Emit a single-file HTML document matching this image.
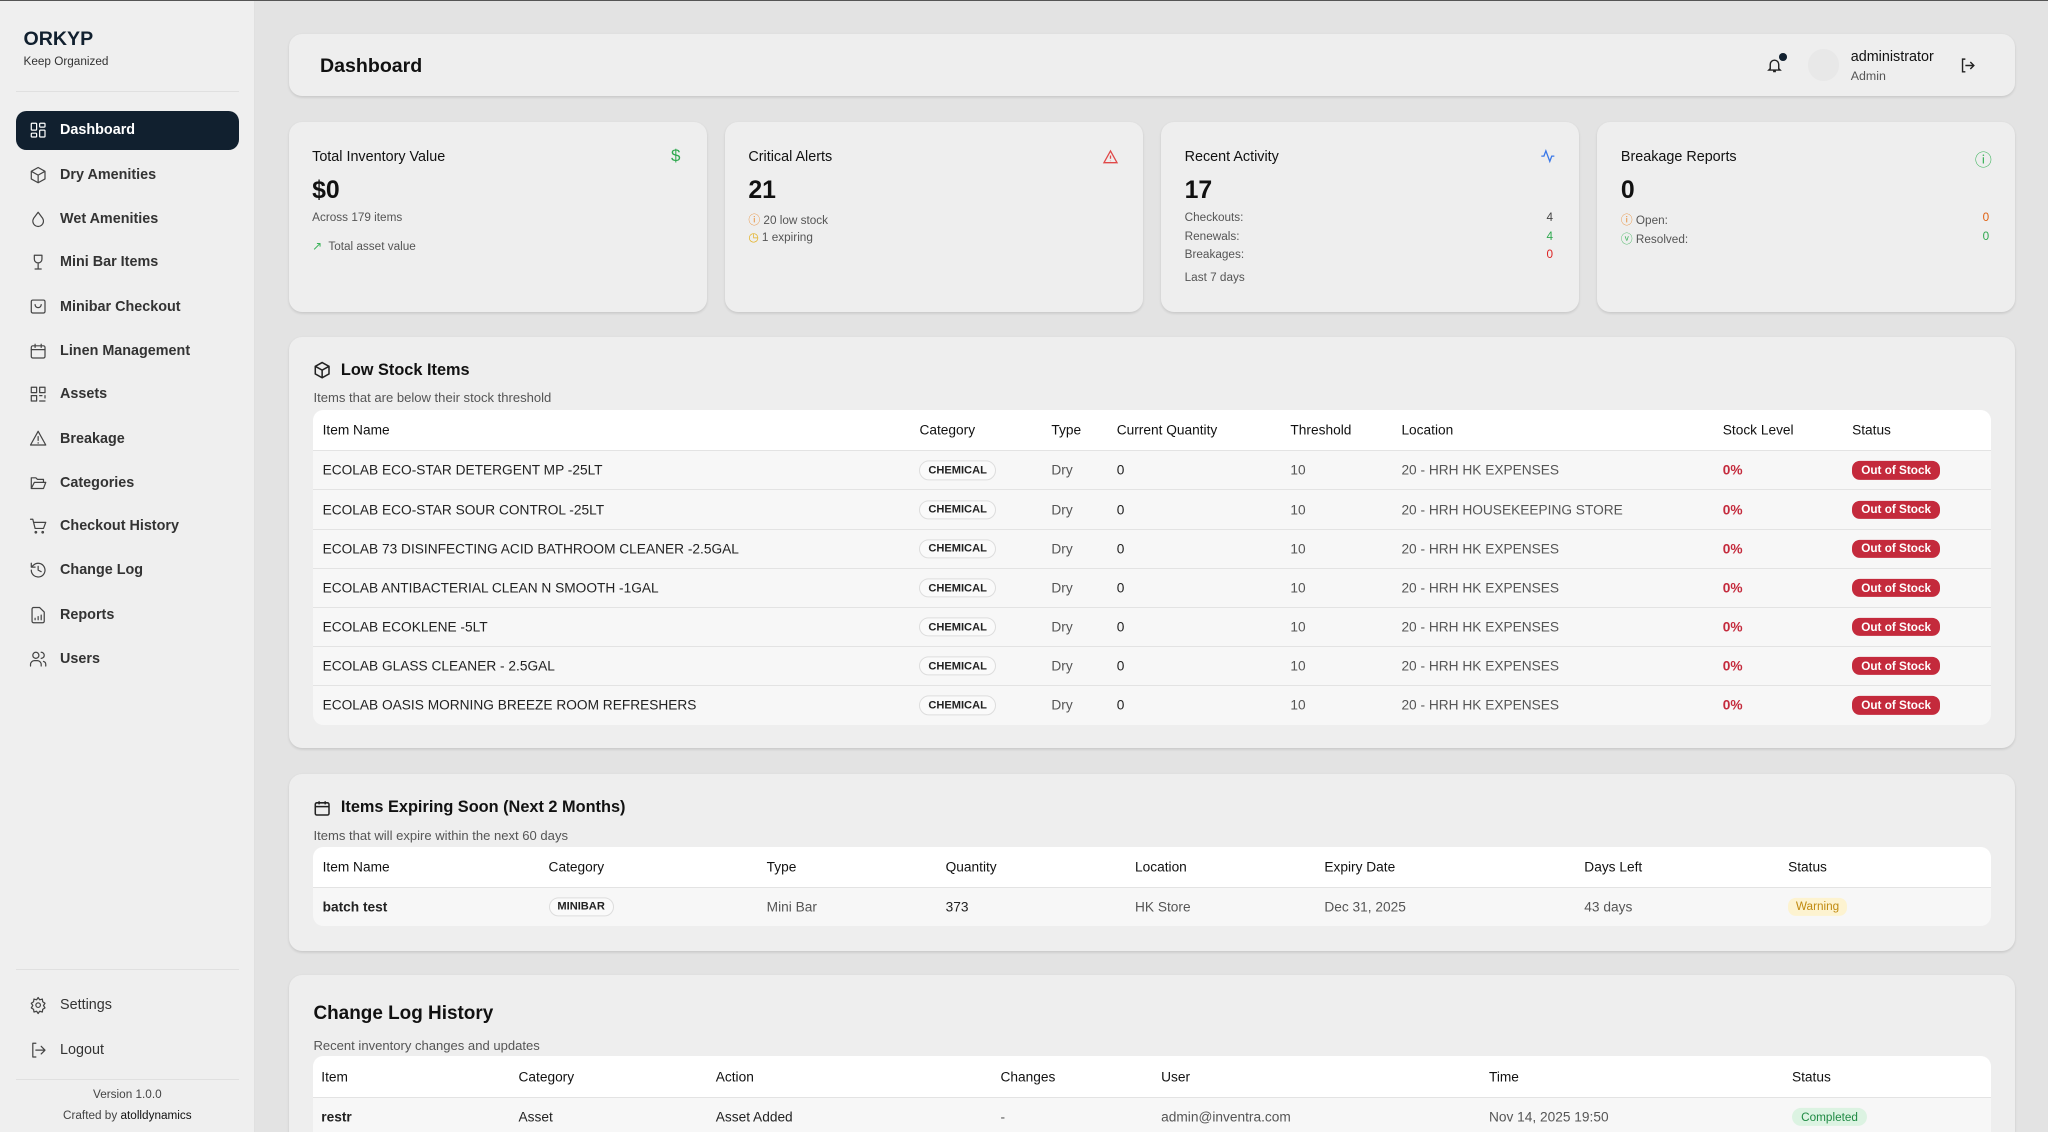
<!DOCTYPE html>
<html><head><meta charset="utf-8"><style>
*{box-sizing:border-box;margin:0;padding:0}
html,body{width:2048px;height:1132px;overflow:hidden;background:#e3e3e3}
#z{zoom:1.30612;width:1568px;height:867px;position:relative;font-family:"Liberation Sans",sans-serif;color:#111;border-top:1px solid #555}
.a{position:absolute}
.sb{left:0;top:0;width:195px;height:867px;background:#efefef;border-right:1px solid #e0e0e0}
.nav{position:absolute;left:12px;width:171px;height:30px;border-radius:8px;font-size:11px;color:#333;display:flex;align-items:center;padding-left:10px;font-weight:bold}
.nav svg{width:14px;height:14px;margin-right:10px;fill:none;stroke:#444;stroke-width:1.6;stroke-linecap:round;stroke-linejoin:round}
.nav.on{background:#11202f;color:#fff}.nav.on svg{stroke:#fff}
.card{position:absolute;background:#eeeeee;border-radius:10px;box-shadow:0 1px 2px rgba(0,0,0,.12)}
.st .t{position:absolute;left:18px;top:20px;font-size:11px}
.st .v{position:absolute;left:18px;top:42px;font-size:19px;font-weight:bold}
.st .s{font-size:9px;color:#555;position:absolute;left:18px}
.st .r{position:absolute;right:20px;font-size:9px}
.tbl{position:absolute;left:19px;right:19px;background:#f7f7f7;border-radius:8px;overflow:hidden}
.row{position:relative;height:30px;border-top:1px solid #e3e3e3;font-size:10.5px;color:#222}
.row.h{background:#fff;border-top:none;height:31px;font-size:10.5px;color:#111}
.row span{position:absolute;top:50%;transform:translateY(-50%);white-space:nowrap}
.g{color:#555}
.chip{border:1px solid #ddd;background:#fafafa;border-radius:8px;padding:2px 6px;font-size:8.5px;font-weight:bold}
.oos{background:#c42a3c;color:#fff;border-radius:6px;padding:2px 7px;font-size:9px;font-weight:bold}
.ttl{position:absolute;left:19px;font-size:12.5px;font-weight:bold}
.sub{position:absolute;left:19px;font-size:10px;color:#555}
</style></head><body><div id="z">
<div class="a sb">
<div class="a" style="left:18px;top:21px;font-size:15px;font-weight:bold;color:#11202f">ORKYP</div>
<div class="a" style="left:18px;top:41px;font-size:9px;color:#333">Keep Organized</div>
<div class="a" style="left:12px;top:69px;width:171px;height:1px;background:#e0e0e0"></div>
<div class="nav on" style="top:84px"><svg viewBox="0 0 24 24"><rect x="3" y="3" width="7" height="9" rx="1"/><rect x="14" y="3" width="7" height="5" rx="1"/><rect x="14" y="12" width="7" height="9" rx="1"/><rect x="3" y="16" width="7" height="5" rx="1"/></svg>Dashboard</div>
<div class="nav" style="top:118px"><svg viewBox="0 0 24 24"><path d="M12 2l9 5v10l-9 5-9-5V7z M3 7l9 5 9-5 M12 12v10"/></svg>Dry Amenities</div>
<div class="nav" style="top:152px"><svg viewBox="0 0 24 24"><path d="M12 3l6 8a7 7 0 1 1-12 0z"/></svg>Wet Amenities</div>
<div class="nav" style="top:185px"><svg viewBox="0 0 24 24"><path d="M7 3h10v5a5 5 0 0 1-10 0z M12 13v7 M8 21h8"/></svg>Mini Bar Items</div>
<div class="nav" style="top:219px"><svg viewBox="0 0 24 24"><rect x="3" y="4" width="18" height="17" rx="2"/><path d="M8 10a4 4 0 0 0 8 0"/></svg>Minibar Checkout</div>
<div class="nav" style="top:253px"><svg viewBox="0 0 24 24"><rect x="3" y="5" width="18" height="16" rx="2"/><path d="M3 10h18M8 3v4M16 3v4"/></svg>Linen Management</div>
<div class="nav" style="top:286px"><svg viewBox="0 0 24 24"><rect x="3" y="3" width="7" height="7"/><rect x="14" y="3" width="7" height="7"/><rect x="3" y="14" width="7" height="7"/><path d="M14 14h3M21 14v3M14 21h7"/></svg>Assets</div>
<div class="nav" style="top:320px"><svg viewBox="0 0 24 24"><path d="M12 3l10 18H2z M12 10v5 M12 18v.5"/></svg>Breakage</div>
<div class="nav" style="top:354px"><svg viewBox="0 0 24 24"><path d="M3 7v12h16l3-8H7l-4 8 M3 7V5h6l2 2h8v4"/></svg>Categories</div>
<div class="nav" style="top:387px"><svg viewBox="0 0 24 24"><path d="M2 3h3l3 12h11l3-8H6"/><circle cx="9" cy="20" r="1"/><circle cx="18" cy="20" r="1"/></svg>Checkout History</div>
<div class="nav" style="top:421px"><svg viewBox="0 0 24 24"><path d="M3 12a9 9 0 1 0 3-6.7L3 8 M3 3v5h5 M12 7v5l4 2"/></svg>Change Log</div>
<div class="nav" style="top:455px"><svg viewBox="0 0 24 24"><path d="M14 2H6a2 2 0 0 0-2 2v16a2 2 0 0 0 2 2h12a2 2 0 0 0 2-2V8z M8 18v-2 M12 18v-4 M16 18v-6"/></svg>Reports</div>
<div class="nav" style="top:489px"><svg viewBox="0 0 24 24"><circle cx="9" cy="7" r="4"/><path d="M2 21v-2a5 5 0 0 1 5-5h4a5 5 0 0 1 5 5v2 M16 3a4 4 0 0 1 0 8 M22 21v-2a4 4 0 0 0-3-4"/></svg>Users</div>
<div class="a" style="left:12px;top:741px;width:171px;height:1px;background:#e0e0e0"></div>
<div class="nav" style="top:754px;font-weight:normal"><svg viewBox="0 0 24 24"><circle cx="12" cy="12" r="3"/><path d="M12 2l2 3 3.5-1 .5 3.5 3 2-2 3 2 3-3 2-.5 3.5-3.5-1-2 3-2-3-3.5 1-.5-3.5-3-2 2-3-2-3 3-2 .5-3.5 3.5 1z"/></svg>Settings</div>
<div class="nav" style="top:788px;font-weight:normal"><svg viewBox="0 0 24 24"><path d="M9 21H5V3h4 M16 17l5-5-5-5 M21 12H9"/></svg>Logout</div>
<div class="a" style="left:12px;top:825px;width:171px;height:1px;background:#e0e0e0"></div>
<div class="a" style="left:0;width:195px;top:832px;text-align:center;font-size:9px;color:#444">Version 1.0.0</div>
<div class="a" style="left:0;width:195px;top:848px;text-align:center;font-size:9px;color:#444">Crafted by <span style="color:#111">atolldynamics</span></div>
</div>

<div class="card" style="left:221px;top:25px;width:1322px;height:48px">
<div class="a" style="left:24px;top:16px;font-size:15px;font-weight:bold">Dashboard</div>
<svg class="a" style="left:1131px;top:17px" width="13" height="14" viewBox="0 0 24 24" fill="none" stroke="#222" stroke-width="2"><path d="M6 17V11a6 6 0 0 1 12 0v6l2 2H4z M10 21h4"/></svg>
<div class="a" style="left:1141px;top:15px;width:6px;height:6px;border-radius:50%;background:#11202f"></div>
<div class="a" style="left:1163px;top:12px;width:24px;height:24px;border-radius:50%;background:#e8e8e8"></div>
<div class="a" style="left:1196px;top:12px;font-size:11px">administrator</div>
<div class="a" style="left:1196px;top:27px;font-size:9.5px;color:#555">Admin</div>
<svg class="a" style="left:1279px;top:18px" width="13" height="13" viewBox="0 0 24 24" fill="none" stroke="#222" stroke-width="2"><path d="M9 21H5V3h4 M16 17l5-5-5-5 M21 12H9"/></svg>
</div>

<div class="card st" style="left:221px;top:93px;width:320px;height:145px">
<div class="t">Total Inventory Value</div><div class="a" style="right:20px;top:18px;color:#2fa84f;font-size:13px">$</div>
<div class="v">$0</div>
<div class="s" style="top:68px">Across 179 items</div>
<div class="s" style="top:89px"><span style="color:#3bb35a">↗</span>&nbsp; Total asset value</div>
</div>
<div class="card st" style="left:555px;top:93px;width:320px;height:145px">
<div class="t">Critical Alerts</div>
<svg class="a" style="right:18px;top:20px" width="13" height="12" viewBox="0 0 24 24" fill="none" stroke="#e04848" stroke-width="2"><path d="M12 3l10 18H2z M12 10v5 M12 18v.5"/></svg>
<div class="v">21</div>
<div class="s" style="top:68px"><span style="color:#e88a30">ⓘ</span> 20 low stock</div>
<div class="s" style="top:82px"><span style="color:#e3b020">◷</span> 1 expiring</div>
</div>
<div class="card st" style="left:889px;top:93px;width:320px;height:145px">
<div class="t">Recent Activity</div>
<svg class="a" style="right:18px;top:19px" width="12" height="14" viewBox="0 0 24 24" fill="none" stroke="#3a78e8" stroke-width="2"><path d="M2 12h4l3-8 6 16 3-8h4"/></svg>
<div class="v">17</div>
<div class="s" style="top:68px">Checkouts:</div><div class="r" style="top:68px;color:#444">4</div>
<div class="s" style="top:82px">Renewals:</div><div class="r" style="top:82px;color:#2fa84f">4</div>
<div class="s" style="top:96px">Breakages:</div><div class="r" style="top:96px;color:#d22">0</div>
<div class="s" style="top:114px">Last 7 days</div>
</div>
<div class="card st" style="left:1223px;top:93px;width:320px;height:145px">
<div class="t">Breakage Reports</div>
<div class="a" style="right:18px;top:18px;color:#3bb35a;font-size:13px">ⓘ</div>
<div class="v">0</div>
<div class="s" style="top:68px"><span style="color:#e88a30">ⓘ</span> Open:</div><div class="r" style="top:68px;color:#e06010">0</div>
<div class="s" style="top:82px"><span style="color:#3bb35a">ⓥ</span> Resolved:</div><div class="r" style="top:82px;color:#2fa84f">0</div>
</div>

<div class="card" style="left:221px;top:257px;width:1322px;height:315px">
<svg class="a" style="left:19px;top:19px" width="14" height="14" viewBox="0 0 24 24" fill="none" stroke="#222" stroke-width="2"><path d="M12 2l9 5v10l-9 5-9-5V7z M3 7l9 5 9-5 M12 12v10"/></svg>
<div class="ttl" style="left:40px;top:19px">Low Stock Items</div>
<div class="sub" style="top:41px">Items that are below their stock threshold</div>
<div class="tbl" style="top:56px">
<div class="row h"><span style="left:7px">Item Name</span><span style="left:464px">Category</span><span style="left:565px">Type</span><span style="left:615px">Current Quantity</span><span style="left:748px">Threshold</span><span style="left:833px">Location</span><span style="left:1079px">Stock Level</span><span style="left:1178px">Status</span></div>
<div class="row"><span style="left:7px">ECOLAB ECO-STAR DETERGENT MP -25LT</span><span class="chip" style="left:464px">CHEMICAL</span><span class="g" style="left:565px">Dry</span><span style="left:615px">0</span><span class="g" style="left:748px">10</span><span class="g" style="left:833px">20 - HRH HK EXPENSES</span><span style="left:1079px;color:#c42a3c;font-weight:bold">0%</span><span class="oos" style="left:1178px">Out of Stock</span></div>
<div class="row"><span style="left:7px">ECOLAB ECO-STAR SOUR CONTROL -25LT</span><span class="chip" style="left:464px">CHEMICAL</span><span class="g" style="left:565px">Dry</span><span style="left:615px">0</span><span class="g" style="left:748px">10</span><span class="g" style="left:833px">20 - HRH HOUSEKEEPING STORE</span><span style="left:1079px;color:#c42a3c;font-weight:bold">0%</span><span class="oos" style="left:1178px">Out of Stock</span></div>
<div class="row"><span style="left:7px">ECOLAB 73 DISINFECTING ACID BATHROOM CLEANER -2.5GAL</span><span class="chip" style="left:464px">CHEMICAL</span><span class="g" style="left:565px">Dry</span><span style="left:615px">0</span><span class="g" style="left:748px">10</span><span class="g" style="left:833px">20 - HRH HK EXPENSES</span><span style="left:1079px;color:#c42a3c;font-weight:bold">0%</span><span class="oos" style="left:1178px">Out of Stock</span></div>
<div class="row"><span style="left:7px">ECOLAB ANTIBACTERIAL CLEAN N SMOOTH -1GAL</span><span class="chip" style="left:464px">CHEMICAL</span><span class="g" style="left:565px">Dry</span><span style="left:615px">0</span><span class="g" style="left:748px">10</span><span class="g" style="left:833px">20 - HRH HK EXPENSES</span><span style="left:1079px;color:#c42a3c;font-weight:bold">0%</span><span class="oos" style="left:1178px">Out of Stock</span></div>
<div class="row"><span style="left:7px">ECOLAB ECOKLENE -5LT</span><span class="chip" style="left:464px">CHEMICAL</span><span class="g" style="left:565px">Dry</span><span style="left:615px">0</span><span class="g" style="left:748px">10</span><span class="g" style="left:833px">20 - HRH HK EXPENSES</span><span style="left:1079px;color:#c42a3c;font-weight:bold">0%</span><span class="oos" style="left:1178px">Out of Stock</span></div>
<div class="row"><span style="left:7px">ECOLAB GLASS CLEANER - 2.5GAL</span><span class="chip" style="left:464px">CHEMICAL</span><span class="g" style="left:565px">Dry</span><span style="left:615px">0</span><span class="g" style="left:748px">10</span><span class="g" style="left:833px">20 - HRH HK EXPENSES</span><span style="left:1079px;color:#c42a3c;font-weight:bold">0%</span><span class="oos" style="left:1178px">Out of Stock</span></div>
<div class="row"><span style="left:7px">ECOLAB OASIS MORNING BREEZE ROOM REFRESHERS</span><span class="chip" style="left:464px">CHEMICAL</span><span class="g" style="left:565px">Dry</span><span style="left:615px">0</span><span class="g" style="left:748px">10</span><span class="g" style="left:833px">20 - HRH HK EXPENSES</span><span style="left:1079px;color:#c42a3c;font-weight:bold">0%</span><span class="oos" style="left:1178px">Out of Stock</span></div>
</div></div>

<div class="card" style="left:221px;top:592px;width:1322px;height:135px">
<svg class="a" style="left:19px;top:19px" width="14" height="14" viewBox="0 0 24 24" fill="none" stroke="#222" stroke-width="2"><rect x="3" y="5" width="18" height="16" rx="2"/><path d="M3 10h18M8 3v4M16 3v4"/></svg>
<div class="ttl" style="left:40px;top:18px">Items Expiring Soon (Next 2 Months)</div>
<div class="sub" style="top:41px">Items that will expire within the next 60 days</div>
<div class="tbl" style="top:56px">
<div class="row h" style="height:30px"><span style="left:7px">Item Name</span><span style="left:180px">Category</span><span style="left:347px">Type</span><span style="left:484px">Quantity</span><span style="left:629px">Location</span><span style="left:774px">Expiry Date</span><span style="left:973px">Days Left</span><span style="left:1129px">Status</span></div>
<div class="row"><span style="left:7px;font-weight:bold">batch test</span><span class="chip" style="left:180px">MINIBAR</span><span class="g" style="left:347px">Mini Bar</span><span style="left:484px">373</span><span class="g" style="left:629px">HK Store</span><span class="g" style="left:774px">Dec 31, 2025</span><span class="g" style="left:973px">43 days</span><span style="left:1129px;background:#fdf3d0;color:#c08a10;border-radius:6px;padding:2px 6px;font-size:9px">Warning</span></div>
</div></div>

<div class="card" style="left:221px;top:746px;width:1322px;height:140px">
<div class="ttl" style="top:21px;font-size:14.5px">Change Log History</div>
<div class="sub" style="top:48px">Recent inventory changes and updates</div>
<div class="tbl" style="top:62px;border-radius:8px 8px 0 0">
<div class="row h"><span style="left:6px">Item</span><span style="left:157px">Category</span><span style="left:308px">Action</span><span style="left:526px">Changes</span><span style="left:649px">User</span><span style="left:900px">Time</span><span style="left:1132px">Status</span></div>
<div class="row"><span style="left:6px;font-weight:bold">restr</span><span style="left:157px">Asset</span><span style="left:308px">Asset Added</span><span class="g" style="left:526px">-</span><span class="g" style="left:649px">admin@inventra.com</span><span class="g" style="left:900px">Nov 14, 2025 19:50</span><span style="left:1132px;background:#dcf3e2;color:#1f8a43;border-radius:8px;padding:2px 7px;font-size:9px">Completed</span></div>
</div></div>
</div></body></html>
